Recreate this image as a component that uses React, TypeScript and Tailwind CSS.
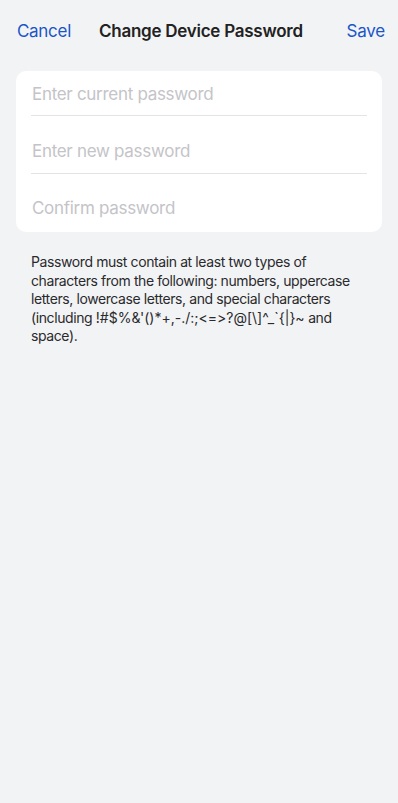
import React, { useState } from 'react';

const fieldClass =
  'block h-[22px] w-full bg-transparent p-0 outline-none text-[17px] leading-[22px] tracking-[-0.3px] text-[#1c1c1e] placeholder:text-[#c4c4c8]';

export default function App() {
  const [current, setCurrent] = useState('');
  const [next, setNext] = useState('');
  const [confirm, setConfirm] = useState('');

  return (
    <div
      className="min-h-[803px] w-full bg-[#f2f3f5] [font-feature-settings:'calt'_0,'liga'_0]"
      style={{ fontFamily: 'Inter, "Noto Sans", sans-serif' }}
    >
      {/* Header */}
      <div className="flex h-[63px] items-center pl-[17px] pr-[13px]">
        <button className="text-[17px] tracking-[-0.3px] text-[#1a56c8]">Cancel</button>
        <h1 className="ml-[28px] text-[17px] font-semibold tracking-[-0.25px] text-[#222]">
          Change Device Password
        </h1>
        <button className="ml-auto text-[17px] tracking-[-0.2px] text-[#1a56c8]">Save</button>
      </div>

      {/* Fields */}
      <div className="mx-4 mt-[8px] rounded-[10px] bg-white px-[15px]">
        <div className="border-b border-[#e4e4e6] pl-[1px] pt-[12px] pb-[10px]">
          <input
            type="password"
            value={current}
            onChange={(e) => setCurrent(e.target.value)}
            placeholder="Enter current password"
            className={fieldClass}
          />
        </div>
        <div className="border-b border-[#e4e4e6] pl-[1px] pt-[24px] pb-[11px]">
          <input
            type="password"
            value={next}
            onChange={(e) => setNext(e.target.value)}
            placeholder="Enter new password"
            className={fieldClass}
          />
        </div>
        <div className="pl-[1px] pt-[23px] pb-[13px]">
          <input
            type="password"
            value={confirm}
            onChange={(e) => setConfirm(e.target.value)}
            placeholder="Confirm password"
            className={fieldClass}
          />
        </div>
      </div>

      {/* Hint */}
      <p className="mt-[21px] px-[31px] text-[14px] leading-[18.5px] tracking-[-0.4px] text-[#2a2a2c]">
        Password must contain at least two types of characters from the following: numbers,
        uppercase letters, lowercase letters, and special characters (including{' '}
        <span className="tracking-[0px]">!#$%&amp;'()*+,-./:;&lt;=&gt;?@[\]^_`{'{'}|{'}'}~</span> and
        space).
      </p>
    </div>
  );
}
